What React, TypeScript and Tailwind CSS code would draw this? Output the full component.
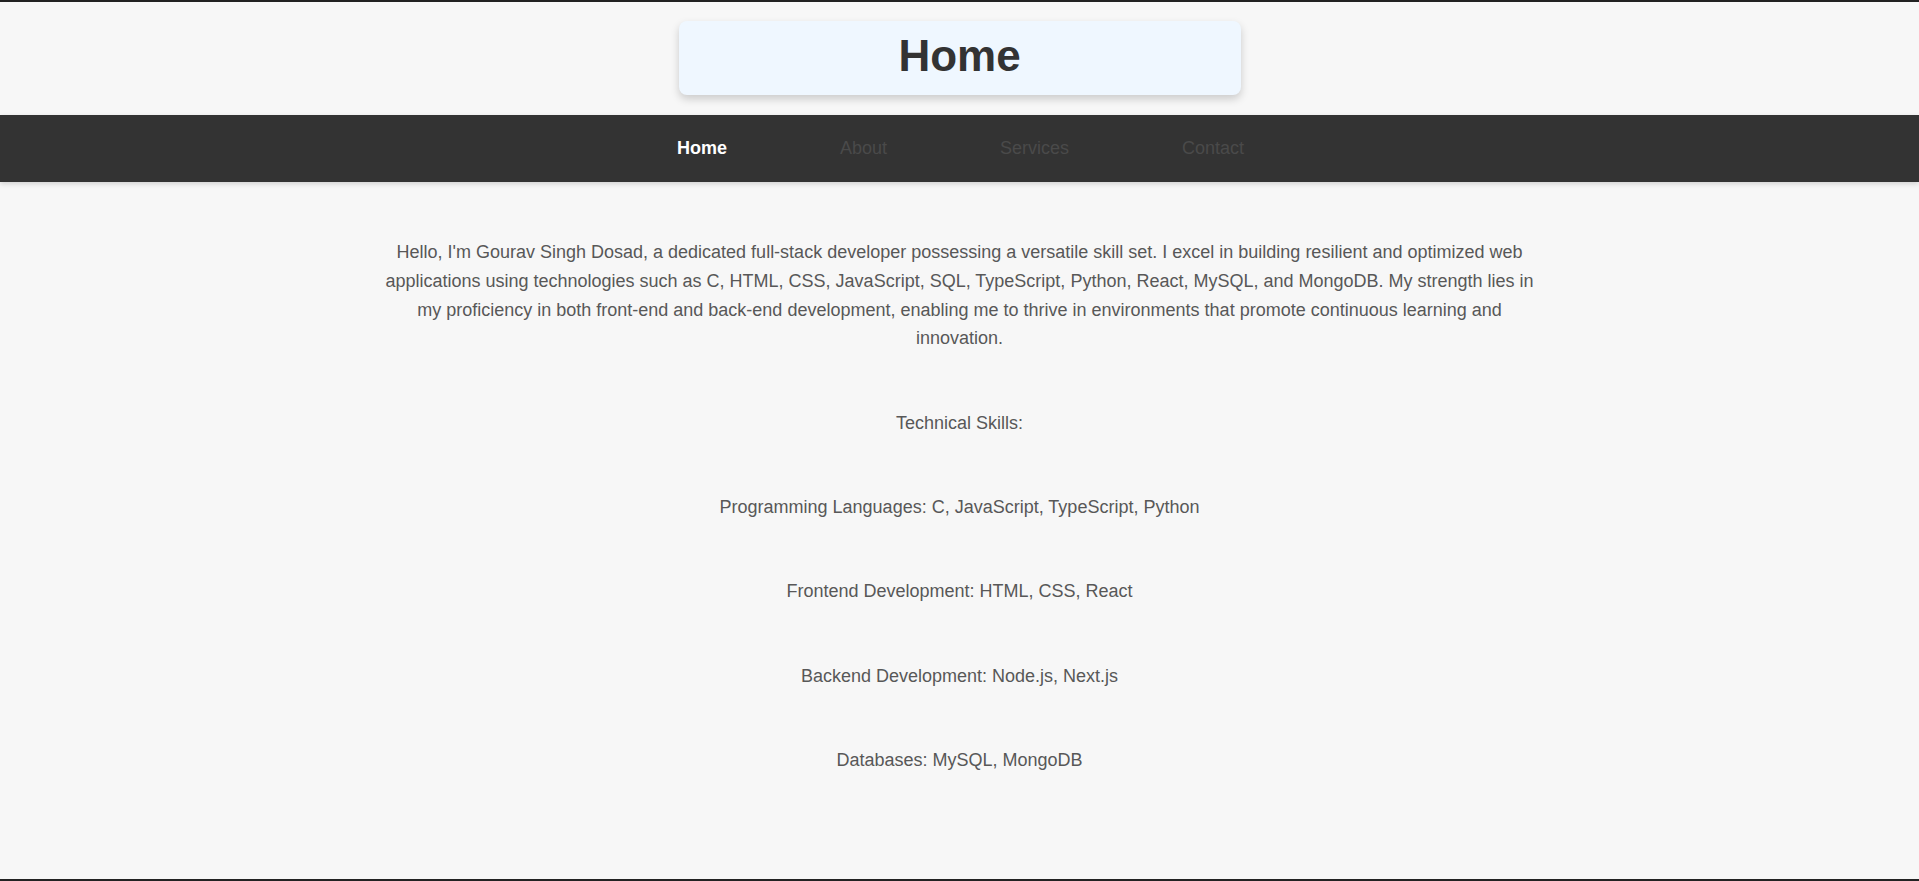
import React from 'react';

const links = ['Home', 'About', 'Services', 'Contact'];

const skills = [
    'Technical Skills:',
    'Programming Languages: C, JavaScript, TypeScript, Python',
    'Frontend Development: HTML, CSS, React',
    'Backend Development: Node.js, Next.js',
    'Databases: MySQL, MongoDB',
];

export default function App() {
    return (
        <div
            className="min-h-[881px] bg-[#f7f7f7] border-y-2 border-[#222] flex flex-col"
            style={{ fontFamily: '"Liberation Sans", Arial, sans-serif' }}
        >
            <header className="pt-[19px] pb-[20px] flex justify-center">
                <div className="w-[562px] h-[74px] rounded-lg bg-[#eff7ff] shadow-[0_4px_8px_rgba(0,0,0,0.18)] flex items-center justify-center pb-[5px]">
                    <h1 className="text-[44px] font-bold text-[#333] leading-none">Home</h1>
                </div>
            </header>

            <nav className="h-[67px] bg-[#333] shadow-[0_2px_5px_rgba(0,0,0,0.15)] flex items-center justify-center gap-[113px] pl-[2px]">
                {links.map((link, i) => (
                    <a
                        key={link}
                        href="#"
                        className={i === 0 ? 'text-[18px] font-bold text-white' : 'text-[18px] text-[#4a4a4a]'}
                    >
                        {link}
                    </a>
                ))}
            </nav>

            <main className="w-[60%] mx-auto pt-[56px] flex flex-col gap-[55.5px] text-center text-[18px] leading-[28.8px] text-[#585858]">
                <p>
                    Hello, I'm Gourav Singh Dosad, a dedicated full-stack developer possessing a versatile skill set. I excel in
                    building resilient and optimized web applications using technologies such as C, HTML, CSS, JavaScript, SQL,
                    TypeScript, Python, React, MySQL, and MongoDB. My strength lies in my proficiency in both front-end and
                    back-end development, enabling me to thrive in environments that promote continuous learning and innovation.
                </p>
                {skills.map((s) => (
                    <p key={s}>{s}</p>
                ))}
            </main>
        </div>
    );
}
